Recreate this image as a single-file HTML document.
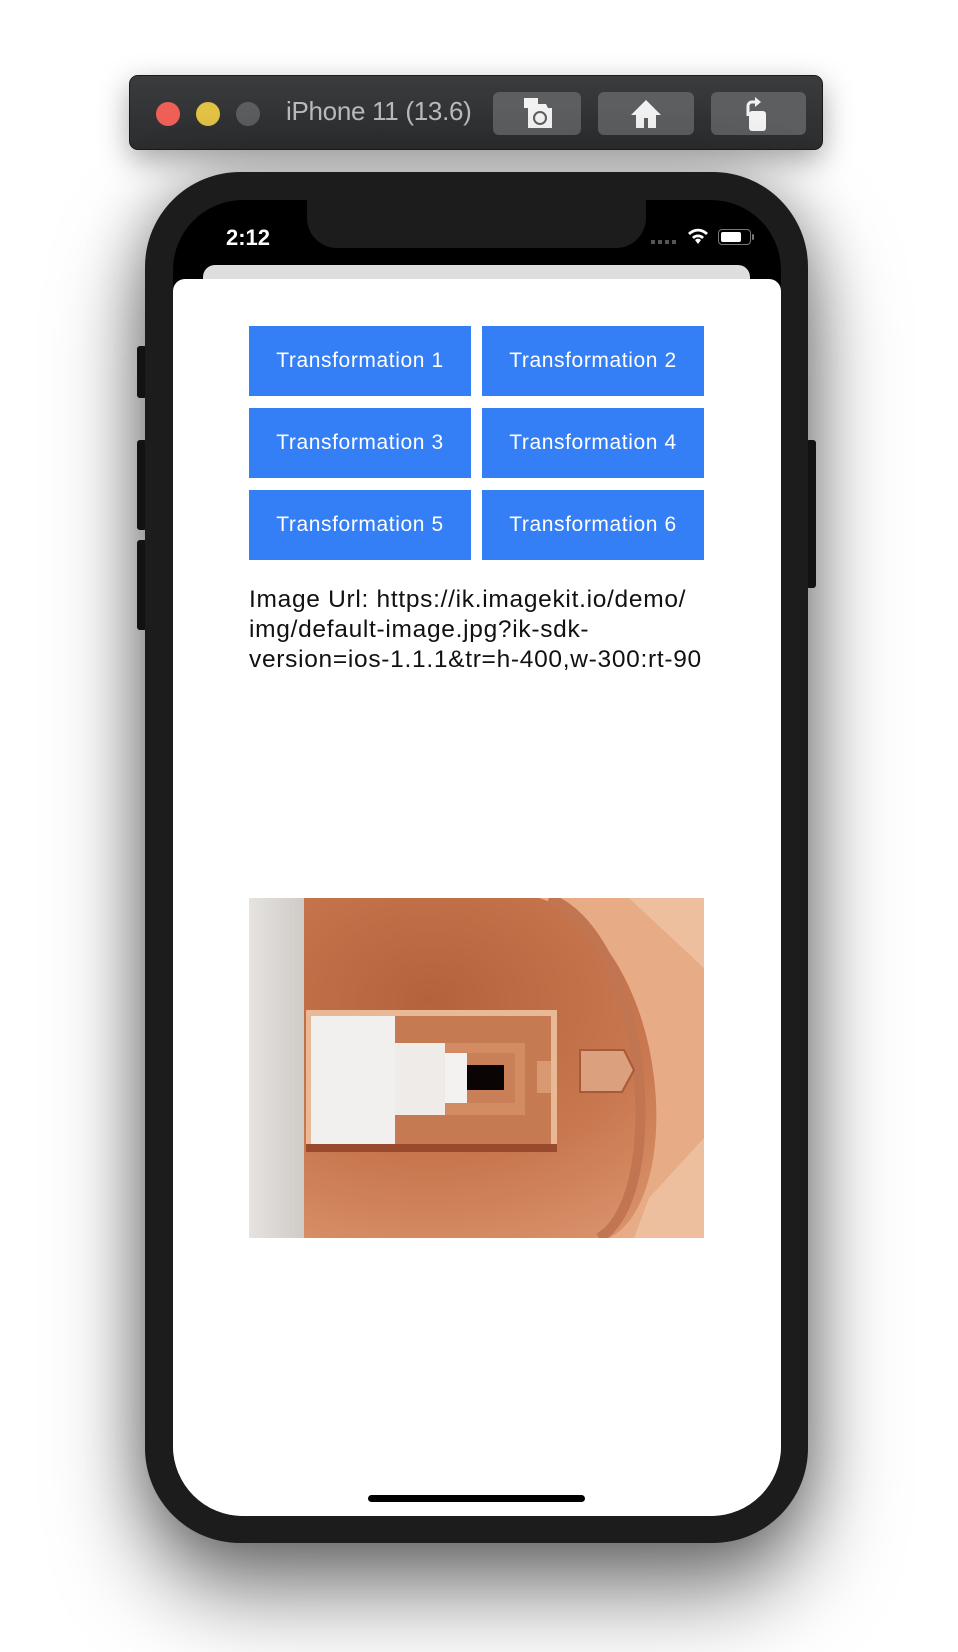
<!DOCTYPE html>
<html><head><meta charset="utf-8">
<style>
*{margin:0;padding:0;box-sizing:border-box}
body{width:958px;height:1652px;background:#fff;position:relative;overflow:hidden;font-family:"Liberation Sans",sans-serif}
.abs{position:absolute}
.toolbar{left:129px;top:75px;width:694px;height:75px;background:linear-gradient(#3a3b3d,#2c2d2f);border-radius:9px;border:1px solid #1b1b1b;box-shadow:0 10px 30px rgba(0,0,0,.35)}
.dot{width:24px;height:24px;border-radius:50%;top:102px}
.tb{top:92px;height:43px;background:#5d5e60;border-radius:6px}
.phone{left:145px;top:172px;width:663px;height:1371px;background:#1c1c1c;border-radius:95px;box-shadow:0 50px 90px rgba(0,0,0,.5),0 0 60px rgba(0,0,0,.3)}
.screen{left:173px;top:200px;width:608px;height:1316px;background:#000;border-radius:70px;overflow:hidden}
.btn{position:absolute;width:222px;height:70px;background:#347ef6;color:#fff;font-size:21px;display:flex;align-items:center;justify-content:center;letter-spacing:.6px}
</style></head><body>
<div class="abs toolbar"></div>
<div class="abs dot" style="left:156px;background:#ee5f55"></div>
<div class="abs dot" style="left:196px;background:#e1c245"></div>
<div class="abs dot" style="left:236px;background:#5c5d5f"></div>
<div class="abs" style="left:286px;top:96px;font-size:26px;color:#b9babb;letter-spacing:-.3px">iPhone 11 (13.6)</div>
<div class="abs tb" style="left:493px;width:88px"></div>
<div class="abs tb" style="left:598px;width:96px"></div>
<div class="abs tb" style="left:711px;width:95px"></div>
<svg class="abs" style="left:520px;top:96px" width="36" height="36" viewBox="0 0 36 36"><path d="M4 2h14v6h8l2 4h4v20H8V12H4z" fill="#f2f2f2"/><circle cx="20" cy="22" r="6" fill="none" stroke="#5d5e60" stroke-width="2"/></svg>
<svg class="abs" style="left:628px;top:98px" width="36" height="32" viewBox="0 0 36 32"><path d="M18 2L3 17h5v13h20V17h5z" fill="#f2f2f2"/><rect x="16" y="20" width="4" height="10" fill="#5d5e60"/></svg>
<svg class="abs" style="left:738px;top:96px" width="36" height="36" viewBox="0 0 36 36"><path d="M10 20V10a4 4 0 0 1 4-4h4" fill="none" stroke="#f2f2f2" stroke-width="3"/><path d="M17 1l6 5-6 5z" fill="#f2f2f2"/><rect x="11" y="15" width="17" height="20" rx="3" fill="#f2f2f2"/></svg>

<div class="abs" style="left:137px;top:346px;width:10px;height:52px;background:#1c1c1c;border-radius:3px"></div>
<div class="abs" style="left:137px;top:440px;width:10px;height:90px;background:#1c1c1c;border-radius:3px"></div>
<div class="abs" style="left:137px;top:540px;width:10px;height:90px;background:#1c1c1c;border-radius:3px"></div>
<div class="abs" style="left:806px;top:440px;width:10px;height:148px;background:#1c1c1c;border-radius:3px"></div>
<div class="abs phone"></div>
<div class="abs screen">
  <div class="abs" style="left:134px;top:0;width:339px;height:48px;background:#1c1c1c;border-radius:0 0 30px 30px"></div>
  <div class="abs" style="left:53px;top:25px;color:#fff;font-size:22px;font-weight:bold">2:12</div>
  <div class="abs" style="left:478px;top:40px;width:26px;height:4px;background:repeating-linear-gradient(90deg,#555 0 4px,transparent 4px 7px)"></div>
  <svg class="abs" style="left:514px;top:28px" width="22" height="17" viewBox="0 0 22 17"><path d="M11 16l-3-4a4 4 0 0 1 6 0z M5 9a8.5 8.5 0 0 1 12 0l-2 2a5.5 5.5 0 0 0-8 0z M1 5a14 14 0 0 1 20 0l-2 2a11 11 0 0 0-16 0z" fill="#fff"/></svg>
  <div class="abs" style="left:545px;top:29px;width:33px;height:16px;border:1.5px solid #777;border-radius:4px"><div style="margin:1.5px;width:20px;height:10px;background:#fff;border-radius:2px"></div></div>
  <div class="abs" style="left:579px;top:34px;width:2px;height:6px;background:#777;border-radius:1px"></div>
  <div class="abs" style="left:30px;top:65px;width:547px;height:40px;background:#dedede;border-radius:12px"></div>
  <div class="abs" style="left:0;top:79px;width:608px;height:1300px;background:#fff;border-radius:12px 12px 0 0"></div>
</div>
<div class="abs" style="left:173px;top:1300px;width:608px;height:216px;background:#fff;border-radius:0 0 70px 70px"></div>
<div class="abs" style="left:368px;top:1495px;width:217px;height:7px;background:#000;border-radius:4px"></div>

<div class="btn" style="left:249px;top:326px">Transformation 1</div>
<div class="btn" style="left:482px;top:326px">Transformation 2</div>
<div class="btn" style="left:249px;top:408px">Transformation 3</div>
<div class="btn" style="left:482px;top:408px">Transformation 4</div>
<div class="btn" style="left:249px;top:490px">Transformation 5</div>
<div class="btn" style="left:482px;top:490px">Transformation 6</div>

<div class="abs" style="left:249px;top:585px;width:480px;font-size:24.5px;line-height:30px;color:#111;letter-spacing:.7px;white-space:nowrap">Image Url: https://ik.imagekit.io/demo/<br>img/default-image.jpg?ik-sdk-<br>version=ios-1.1.1&amp;tr=h-400,w-300:rt-90</div>

<svg class="abs" style="left:249px;top:898px" width="455" height="340" viewBox="0 0 455 340">
<defs>
<linearGradient id="w" x1="0" x2="1"><stop offset="0" stop-color="#e6e3e0"/><stop offset="1" stop-color="#cfcbc7"/></linearGradient>
<radialGradient id="o" cx=".4" cy=".3" r=".8"><stop offset="0" stop-color="#b4623c"/><stop offset=".6" stop-color="#c8774f"/><stop offset="1" stop-color="#d9926a"/></radialGradient>
</defs>
<rect width="455" height="340" fill="url(#o)"/>
<rect x="0" y="0" width="55" height="340" fill="url(#w)"/>
<path d="M290 0 C420 40 440 300 360 340 L455 340 L455 0z" fill="#e7ac86"/>
<path d="M300 0 C400 40 420 300 350 340" fill="none" stroke="#c17550" stroke-width="10"/>
<path d="M380 0h75v70zM400 300l55-60v100h-70z" fill="#f0c4a4" opacity=".8"/>
<rect x="57" y="112" width="251" height="141" fill="#e9b895"/>
<rect x="62" y="118" width="240" height="128" fill="#c57a51"/>
<rect x="62" y="118" width="84" height="128" fill="#f2f0ee"/>
<rect x="146" y="145" width="130" height="72" fill="#d28b62"/>
<rect x="146" y="145" width="50" height="72" fill="#eeebe8"/>
<rect x="196" y="155" width="70" height="50" fill="#c98058"/>
<rect x="196" y="155" width="22" height="50" fill="#f4f2f0"/>
<rect x="218" y="167" width="37" height="25" fill="#0a0504"/>
<rect x="57" y="246" width="251" height="8" fill="#9a4a2c"/>
<path d="M331 152h44l10 20-12 22h-42z" fill="#dba07e" stroke="#a8593a" stroke-width="2"/>
<rect x="288" y="163" width="14" height="32" fill="#d89872"/>
</svg>
</body></html>
